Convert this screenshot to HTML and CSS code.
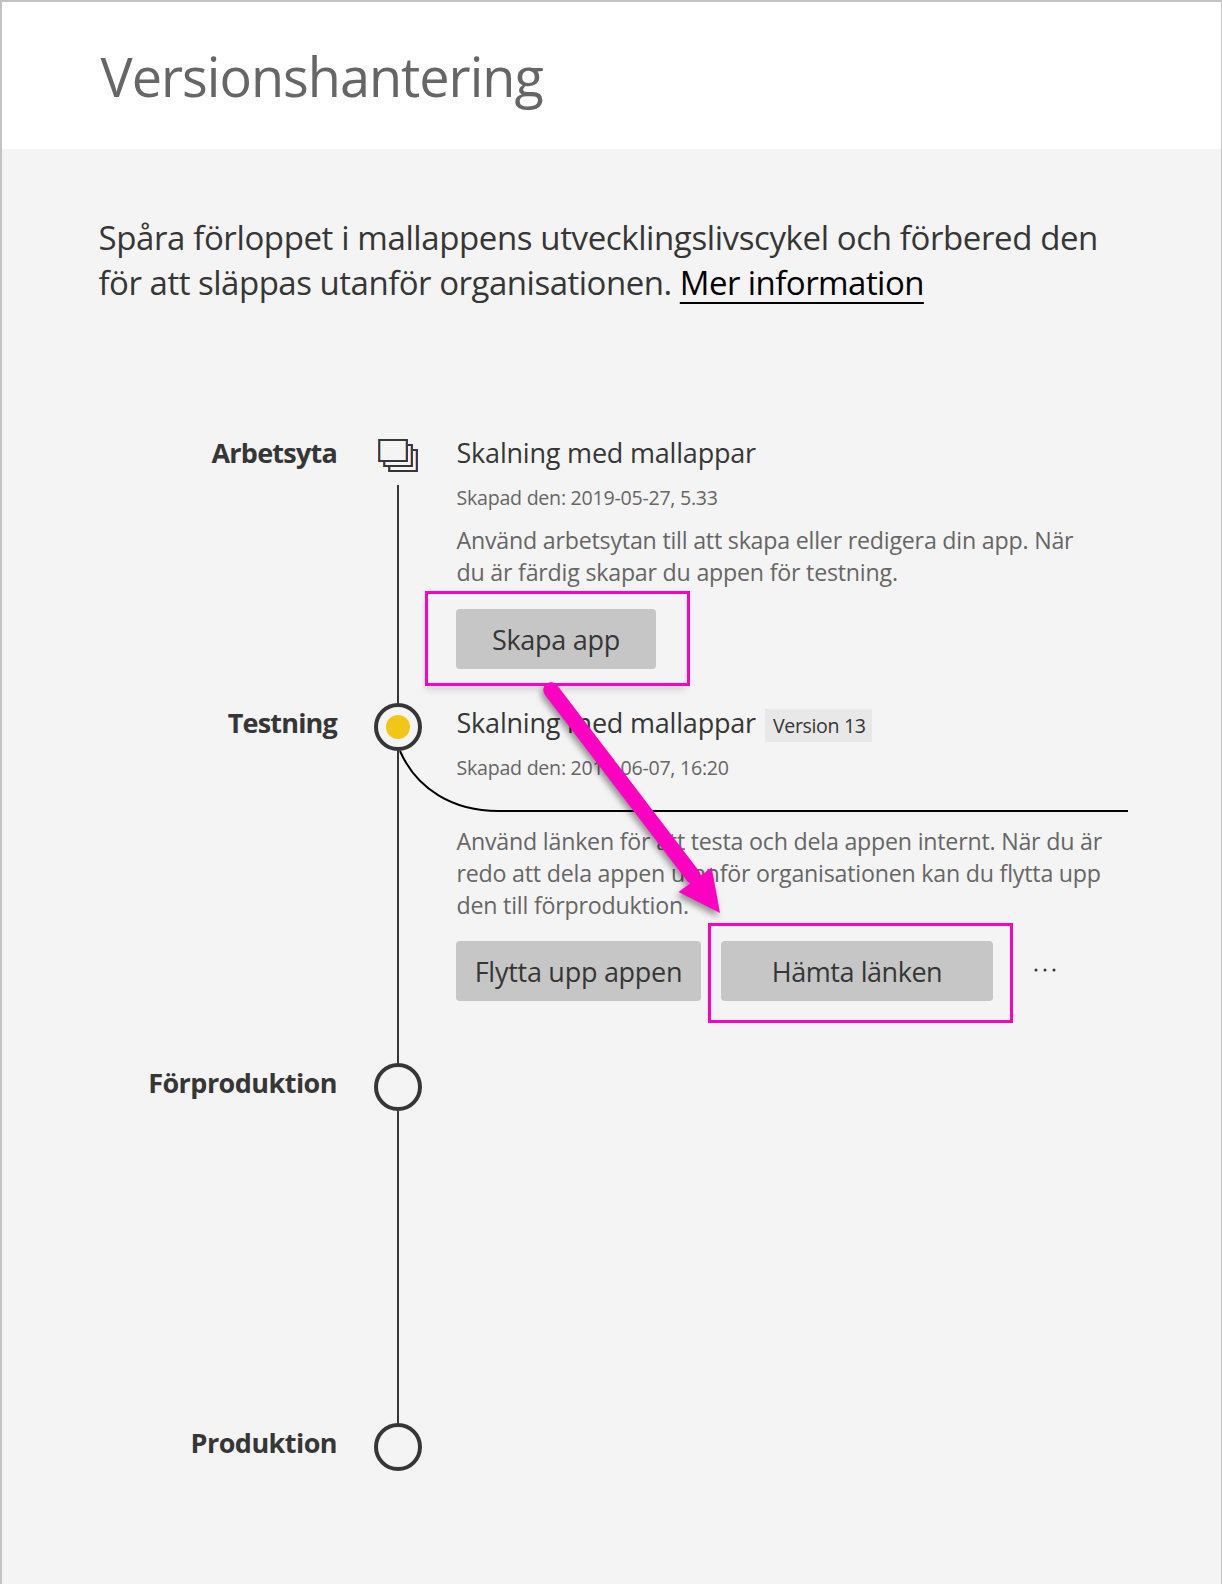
FILE: index.html
```
<!DOCTYPE html>
<html lang="sv">
<head>
<meta charset="utf-8">
<title>Versionshantering</title>
<link rel="stylesheet" href="styles.css">
</head>
<body>
<div class="page">
  <header class="header"><h1>Versionshantering</h1></header>
  <main class="main">
    <p class="intro">
      <span class="line">Spåra förloppet i mallappens utvecklingslivscykel och förbered den</span>
      <span class="line tight">för att släppas utanför organisationen. <a href="#" class="more">Mer information</a></span>
    </p>

    <div class="timeline">
      <section class="stage first">
        <h2 class="label l-workspace">Arbetsyta</h2>
        <div class="rail">
          <div class="icon-slot">
            <svg class="stack" width="42" height="36" viewBox="0 0 42 36">
              <defs>
                <g id="sheet">
                  <path d="M1 1h28v21H1z" fill="#f4f4f4" stroke="#363636" stroke-width="2"/>
                  <path d="M.5 0v23" stroke="#8c3a2e"/>
                  <path d="M2.500 2v19" stroke="#7cc4f4"/>
                  <path d="M27.500 2v19" stroke="#f0bd7a"/>
                  <path d="M29.500 0v23" stroke="#2f3a94"/>
                </g>
              </defs>
              <use href="#sheet" x="11" y="11"/>
              <use href="#sheet" x="6" y="6"/>
              <use href="#sheet" x="1" y="1"/>
            </svg>
          </div>
          <div class="track"></div>
        </div>
        <div class="content">
          <div class="title-row"><h3>Skalning med mallappar</h3></div>
          <div class="meta">Skapad den: 2019-05-27, 5.33</div>
          <p class="desc">
            <span class="line">Använd arbetsytan till att skapa eller redigera din app. När</span>
            <span class="line">du är färdig skapar du appen för testning.</span>
          </p>
          <div class="actions"><button class="btn w-create">Skapa app</button></div>
        </div>
      </section>

      <section class="stage testing">
        <h2 class="label l-testing">Testning</h2>
        <div class="rail">
          <div class="node"><i class="dot"></i></div>
          <div class="track"></div>
        </div>
        <div class="content">
          <div class="title-row"><h3>Skalning med mallappar</h3><span class="badge">Version 13</span></div>
          <div class="meta">Skapad den: 2019-06-07, 16:20</div>
          <p class="desc">
            <span class="line">Använd länken för att testa och dela appen internt. När du är</span>
            <span class="line">redo att dela appen utanför organisationen kan du flytta upp</span>
            <span class="line">den till förproduktion.</span>
          </p>
          <div class="actions">
            <button class="btn w-promote">Flytta upp appen</button>
            <button class="btn w-link">Hämta länken</button>
            <svg class="dots" width="24" height="4" viewBox="0 0 24 4" fill="#363636"><circle cx="3" cy="2" r="1.5"/><circle cx="12" cy="2" r="1.5"/><circle cx="21" cy="2" r="1.5"/></svg>
          </div>
        </div>
        <svg class="branch" width="732" height="64" viewBox="0 0 732 64" fill="none" stroke="#000" stroke-width="2"><path d="M4 2C21 41 58 62 102 62H732" /></svg>
      </section>

      <section class="stage">
        <h2 class="label l-pre">Förproduktion</h2>
        <div class="rail"><div class="node"></div><div class="track"></div></div>
      </section>

      <section class="stage last">
        <h2 class="label l-prod">Produktion</h2>
        <div class="rail"><div class="node"></div></div>
      </section>
    </div>
  </main>

  <div class="callout c-create"></div>
  <div class="callout c-link"></div>
  <svg class="arrow" width="200" height="250" viewBox="530 675 200 250">
    <path d="M551 690L693 876" stroke="#ff00c3" stroke-width="15.5" stroke-linecap="round"/>
    <path d="M720 913L711.7 867.5L678.5 892Z" fill="#ff00c3"/>
  </svg>
</div>
</body>
</html>
```
FILE: styles.css
```
* { box-sizing: border-box; }
body { margin: 0; font-family: "Open Sans", "Noto Sans", sans-serif; color: #363636; }
h1, h2, h3, p { margin: 0; font-weight: 400; }

.page {
  position: relative;
  height: 1584px;
  overflow: hidden;
  background: #f4f4f4;
  border: solid #c3c3c3;
  border-width: 2px 1px 0 2px;
}
.header { height: 147px; padding: 37px 0 0 98.5px; background: #fff; }
h1 { font-size: 54px; line-height: 74px; letter-spacing: -1px; color: #666; }

.main { padding-top: 66px; }
.intro { padding-left: 96.5px; font-size: 33px; line-height: 45px; }
.line { display: block; white-space: nowrap; }
.intro .line { letter-spacing: -0.39px; }
.intro .tight { letter-spacing: -0.49px; }
.more {
  display: inline-block;
  height: 45px;
  color: #000;
  text-decoration: underline;
  text-decoration-thickness: 2px;
  text-underline-offset: 7px;
  text-decoration-skip-ink: none;
  letter-spacing: -0.55px;
}

.timeline { margin-top: 128px; }
.stage {
  position: relative;
  display: grid;
  grid-template-columns: 335px 37px 48px 34px 672px;
  height: 360px;
}
.first { height: 270px; }
.label {
  grid-column: 1;
  padding-top: 1px;
  text-align: right;
  font-size: 27px;
  line-height: 38px;
  font-weight: 700;
}
.l-workspace { letter-spacing: -0.77px; }
.l-testing { letter-spacing: -0.8px; }
.l-pre { letter-spacing: -0.54px; }
.l-prod { letter-spacing: -0.55px; }

.rail { grid-column: 3; display: flex; flex-direction: column; align-items: center; }
.icon-slot { height: 52px; padding-top: 5px; }
.stack { display: block; }
.track { flex: 1; width: 2px; background: #363636; }
.node {
  display: grid;
  place-items: center;
  width: 48px;
  height: 48px;
  border: 4px solid #363636;
  border-radius: 50%;
}
.dot { width: 24px; height: 24px; border-radius: 50%; background: #f2c617; }

.content { grid-column: 5; }
.title-row { display: flex; align-items: flex-start; height: 38px; }
h3 { padding: 1px 0 0 0.5px; font-size: 27px; line-height: 38px; letter-spacing: -0.2px; white-space: nowrap; }
.badge {
  width: 107px;
  height: 33px;
  margin: 6px 0 0 9px;
  padding-left: 8px;
  background: #e8e8e8;
  font-size: 19.6px;
  line-height: 33px;
  letter-spacing: -0.36px;
  white-space: nowrap;
}
.meta { margin-top: 13px; padding-left: 0.5px; height: 28px; font-size: 19.6px; line-height: 28px; letter-spacing: -0.25px; color: #666; }
.desc { margin-top: 12px; padding-left: 0.5px; font-size: 23.2px; line-height: 32px; letter-spacing: -0.21px; color: #666; }
.testing .desc { margin-top: 43px; }
.actions { display: flex; align-items: center; gap: 20px; margin-top: 21px; }
.testing .actions { margin-top: 20px; }
.btn {
  height: 60px;
  padding: 1px 0 0;
  border: 0;
  border-radius: 4px;
  background: #c6c6c6;
  color: #363636;
  font: 27px/38px "Open Sans", "Noto Sans", sans-serif;
  letter-spacing: -0.27px;
}
.w-create { width: 200px; }
.w-promote { width: 245px; }
.w-link { width: 272px; letter-spacing: -0.45px; }
.dots { margin: -2px 0 0 20px; }

.branch { position: absolute; left: 394px; top: 46px; }
.callout { position: absolute; border: 3px solid #ff00c3; }
.c-create { left: 423px; top: 589px; width: 265px; height: 95px; box-shadow: -2px 7px 6px -2px rgba(0, 0, 0, 0.1); }
.c-link { left: 706px; top: 921px; width: 305px; height: 100px; }
.arrow { position: absolute; left: 528px; top: 673px; filter: drop-shadow(-2px 4px 3px rgba(0, 0, 0, 0.4)); }
```
